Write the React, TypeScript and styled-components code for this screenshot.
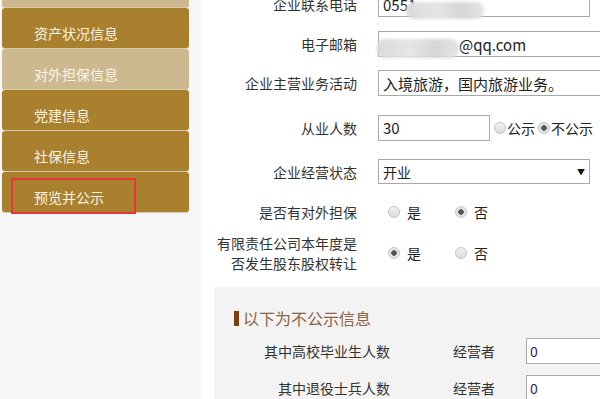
import styled, { createGlobalStyle } from 'styled-components';

const GlobalStyle = createGlobalStyle`
  html, body {
    margin: 0;
    padding: 0;
    background: #ffffff;
    overflow: hidden;
  }
  body {
    font-family: "Noto Sans CJK SC", "Liberation Sans", sans-serif;
    color: #333;
  }
`;

const Page = styled.div`
  display: flex;
  width: 600px;
  height: 399px;
  overflow: hidden;
`;

const Sidebar = styled.div`
  width: 201px;
  flex-shrink: 0;
  background: #f7f7f7;
`;

const Menu = styled.ul`
  list-style: none;
  margin: -33px 0 0 2px;
  padding: 0;
  width: 187px;
  display: flex;
  flex-direction: column;
  gap: 1px;
`;

const MenuItem = styled.li<{ $active?: boolean }>`
  position: relative;
  box-sizing: border-box;
  height: 40px;
  padding: 15px 0 0 32px;
  line-height: 20px;
  border-radius: 3px;
  background: ${(p) => (p.$active ? '#cdb98f' : '#a9802e')};
  box-shadow: 0 1px 0 #d9c9a4;
  color: #fbf4e4;
  font-size: 14px;
`;

const Highlight = styled.span`
  position: absolute;
  box-sizing: border-box;
  left: 9px;
  top: 6px;
  width: 125px;
  height: 36px;
  border: 2px solid #e8363a;
`;

const Main = styled.div`
  flex: 1;
  padding-left: 13px;
  display: flex;
  flex-direction: column;
`;

const Form = styled.div`
  margin-top: -16px;
  display: flex;
  flex-direction: column;
`;

const Row = styled.div<{ $h: number }>`
  height: ${(p) => p.$h}px;
  display: grid;
  grid-template-columns: 143px 1fr;
  column-gap: 21px;
  align-items: center;
`;

const Label = styled.div`
  text-align: right;
  font-size: 14px;
  line-height: 20px;
  color: #333;
`;

const Field = styled.div`
  position: relative;
  display: flex;
  align-items: center;
  min-width: 0;
`;

const Input = styled.div<{ $w?: number }>`
  box-sizing: border-box;
  width: ${(p) => (p.$w ? `${p.$w}px` : '240px')};
  flex-shrink: 0;
  height: 26px;
  border: 1px solid #a9a9a9;
  background: #fff;
  padding: 0 4px;
  display: flex;
  align-items: center;
  font-size: 15px;
  color: #222;
  white-space: nowrap;
  overflow: hidden;
`;

const Select = styled(Input)`
  justify-content: space-between;
  height: 25px;
  padding-right: 4px;
  font-size: 14px;
`;

const Arrow = styled.span`
  font-size: 8px;
  color: #111;
`;

const Blur = styled.span<{ $l: number; $t: number; $w: number; $h: number }>`
  position: absolute;
  left: ${(p) => p.$l}px;
  top: ${(p) => p.$t}px;
  width: ${(p) => p.$w}px;
  height: ${(p) => p.$h}px;
  border-radius: 8px;
  background: linear-gradient(90deg, #d9d9d9, #e6e6e6 40%, #d6d6d6 70%, #e4e4e4);
  filter: blur(1.5px);
`;

const RadioGroup = styled.div<{ $gap: number; $ml: number }>`
  display: flex;
  align-items: center;
  gap: ${(p) => p.$gap}px;
  margin-left: ${(p) => p.$ml}px;
`;

const RadioOpt = styled.label<{ $tight?: boolean }>`
  display: flex;
  align-items: center;
  gap: ${(p) => (p.$tight ? '1px' : '7px')};
  font-size: 14px;
  color: #222;
`;

const Dot = styled.span<{ $on?: boolean }>`
  box-sizing: border-box;
  width: 12px;
  height: 12px;
  border-radius: 50%;
  border: 1px solid #c4c4c4;
  background: ${(p) =>
    p.$on
      ? 'radial-gradient(circle, #555 0 2.5px, #e4e4e4 3px)'
      : 'linear-gradient(#f2f2f2, #dcdcdc)'};
`;

const Panel = styled.div`
  margin-top: 14px;
  background: #f3f3f3;
  padding: 21px 0 0 20px;
  flex: 1;
`;

const Heading = styled.div`
  display: flex;
  align-items: center;
  gap: 4px;
  font-size: 16px;
  color: #8a6446;
  height: 20px;
  margin-bottom: 4px;
`;

const HeadBar = styled.span`
  width: 5px;
  height: 15px;
  background: #7b3f0c;
`;

const PanelRow = styled.div`
  display: grid;
  grid-template-columns: 156px 63px 73px 1fr;
  align-items: center;
  height: 37px;
  font-size: 14px;
`;

const PanelInput = styled(Input)`
  width: 100px;
  height: 26px;
  color: #2a2a60;
  font-size: 14px;
  padding-left: 3px;
`;

export default function App() {
  return (
    <Page>
      <GlobalStyle />
      <Sidebar>
        <Menu>
          <MenuItem $active>基本信息</MenuItem>
          <MenuItem>资产状况信息</MenuItem>
          <MenuItem $active>对外担保信息</MenuItem>
          <MenuItem>党建信息</MenuItem>
          <MenuItem>社保信息</MenuItem>
          <MenuItem>
            预览并公示
            <Highlight />
          </MenuItem>
        </Menu>
      </Sidebar>
      <Main>
        <Form>
          <Row $h={40}>
            <Label>企业联系电话</Label>
            <Field>
              <Input $w={212}>0551</Input>
              <Blur $l={28} $t={11} $w={78} $h={17} />
            </Field>
          </Row>
          <Row $h={40}>
            <Label>电子邮箱</Label>
            <Field>
              <Input>
                <span style={{ paddingLeft: 76 }}>@qq.com</span>
              </Input>
              <Blur $l={-1} $t={8} $w={82} $h={19} />
            </Field>
          </Row>
          <Row $h={38}>
            <Label>企业主营业务活动</Label>
            <Field>
              <Input>入境旅游，国内旅游业务。</Input>
            </Field>
          </Row>
          <Row $h={51}>
            <Label>从业人数</Label>
            <Field>
              <Input $w={112}>30</Input>
              <RadioGroup $gap={3} $ml={4}>
                <RadioOpt $tight>
                  <Dot />
                  公示
                </RadioOpt>
                <RadioOpt $tight>
                  <Dot $on />
                  不公示
                </RadioOpt>
              </RadioGroup>
            </Field>
          </Row>
          <Row $h={37}>
            <Label>企业经营状态</Label>
            <Field>
              <Select $w={212}>
                开业
                <Arrow>▼</Arrow>
              </Select>
            </Field>
          </Row>
          <Row $h={43}>
            <Label>是否有对外担保</Label>
            <Field>
              <RadioGroup $gap={34} $ml={10}>
                <RadioOpt>
                  <Dot />是
                </RadioOpt>
                <RadioOpt>
                  <Dot $on />否
                </RadioOpt>
              </RadioGroup>
            </Field>
          </Row>
          <Row $h={40}>
            <Label>
              有限责任公司本年度是
              <br />
              否发生股东股权转让
            </Label>
            <Field>
              <RadioGroup $gap={34} $ml={10}>
                <RadioOpt>
                  <Dot $on />是
                </RadioOpt>
                <RadioOpt>
                  <Dot />否
                </RadioOpt>
              </RadioGroup>
            </Field>
          </Row>
        </Form>
        <Panel>
          <Heading>
            <HeadBar />
            以下为不公示信息
          </Heading>
          <PanelRow>
            <Label>其中高校毕业生人数</Label>
            <span />
            <span>经营者</span>
            <PanelInput>0</PanelInput>
          </PanelRow>
          <PanelRow>
            <Label>其中退役士兵人数</Label>
            <span />
            <span>经营者</span>
            <PanelInput>0</PanelInput>
          </PanelRow>
        </Panel>
      </Main>
    </Page>
  );
}
